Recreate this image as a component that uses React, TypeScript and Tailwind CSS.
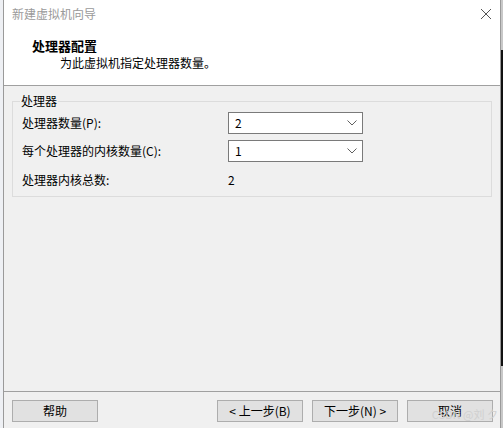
const font = "font-['Microsoft_YaHei','Noto_Sans_CJK_SC',sans-serif]";

function Combo({ value }: { value: string }) {
  return (
    <div className="flex h-[22px] w-[135px] items-center justify-between border border-[#7a7a7a] bg-white pl-[6px] pr-[5px]">
      <span className="text-[12px] leading-none text-black">{value}</span>
      <svg width="10" height="6" viewBox="0 0 10 6" className="text-[#606060]">
        <path d="M0.5 0.5 L5 5 L9.5 0.5" fill="none" stroke="currentColor" strokeWidth="1" />
      </svg>
    </div>
  );
}

function Btn({ label }: { label: string }) {
  return (
    <button className="flex h-[22px] w-[86px] items-center justify-center border border-[#adadad] bg-[#e1e1e1] text-[12px] leading-none text-black">
      {label}
    </button>
  );
}

export default function App() {
  return (
    <div className={`flex h-[428px] w-[503px] overflow-hidden bg-[#f4f4f6] ${font}`}>
      <div className="w-[3px] bg-[#eef0f4]" />
      <div className="relative flex w-[498px] flex-col border-x border-[#9a9a9a]">
        {/* title bar + header */}
        <div className="flex h-[86px] flex-col border-b border-[#a0a0a0] bg-white">
          <div className="flex h-[28px] items-center justify-between pl-[8px] pr-[8px]">
            <span className="text-[12px] text-[#9a9a9a]">新建虚拟机向导</span>
            <svg width="12" height="12" viewBox="0 0 12 12" className="text-[#555]">
              <path d="M1 1 L11 11 M11 1 L1 11" stroke="currentColor" strokeWidth="1" />
            </svg>
          </div>
          <div className="mt-[10px] pl-[28px] text-[13px] font-bold leading-[15px] text-black">
            处理器配置
          </div>
          <div className="mt-[2px] pl-[56px] text-[12px] leading-[15px] text-black">
            为此虚拟机指定处理器数量。
          </div>
        </div>

        {/* body */}
        <div className="flex flex-1 flex-col bg-[#f0f0f0] px-[8px] pt-[8px]">
          <fieldset className="h-[103px] w-[480px] border border-[#dcdcdc] pl-[9px] pr-[128px]">
            <legend className="ml-[-2px] px-[1px] text-[12px] leading-[14px] text-black">处理器</legend>
            <div className="mt-[4px] flex items-center justify-between">
              <span className="text-[12px] text-black">处理器数量(P):</span>
              <Combo value="2" />
            </div>
            <div className="mt-[6px] flex items-center justify-between">
              <span className="text-[12px] text-black">每个处理器的内核数量(C):</span>
              <Combo value="1" />
            </div>
            <div className="mt-[9px] flex items-center">
              <span className="w-[206px] text-[12px] text-black">处理器内核总数:</span>
              <span className="text-[12px] text-black">2</span>
            </div>
          </fieldset>
        </div>

        {/* footer */}
        <div className="flex h-[37px] items-start border-t border-[#a0a0a0] bg-[#f0f0f0] pl-[8px] pt-[8px]">
          <Btn label="帮助" />
          <div className="ml-[119px] flex gap-[9px]">
            <Btn label="< 上一步(B)" />
            <Btn label="下一步(N) >" />
            <Btn label="取消" />
          </div>
        </div>
        <span className="absolute bottom-[8px] right-[2px] text-[11px] leading-none text-[#d0d0d0]">CSDN @刘 ク</span>
      </div>
      <div className="flex w-[2px] flex-col">
        <div className="h-[50px] bg-[#c8c8c8]" />
        <div className="flex-1 bg-[#111]" />
        <div className="h-[62px] bg-[#c8c8c8]" />
      </div>
    </div>
  );
}
